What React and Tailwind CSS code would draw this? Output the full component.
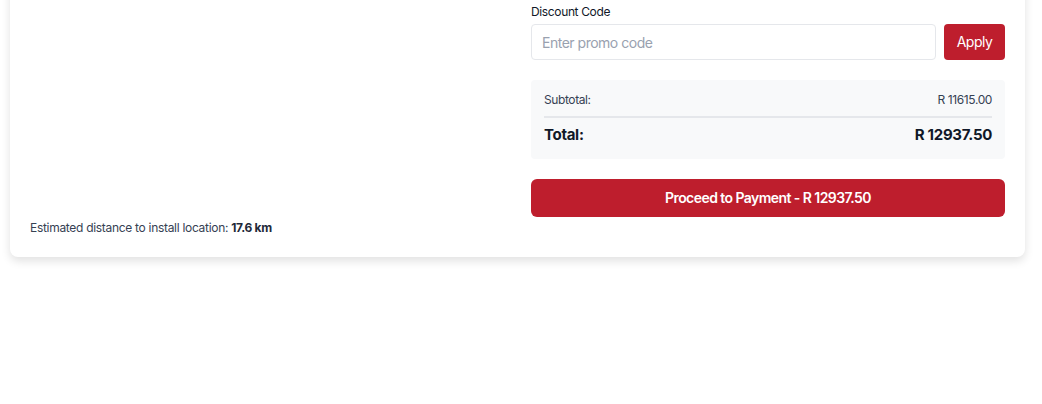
export default function App() {
  return (
    <div className="min-h-[404px] bg-white font-['Inter',sans-serif] text-gray-800">
      <div className="ml-[10px] w-[1015px] -mt-6 rounded-lg bg-white px-5 pt-6 pb-[21px] shadow-[0_4px_10px_rgba(0,0,0,0.12)]">
        <div className="grid grid-cols-2 gap-[27px]">
          <div></div>
          <div>
            <label className="block pt-[4px] text-xs leading-4 tracking-[-0.03em] text-gray-900">Discount Code</label>
            <div className="mt-[4px] flex gap-2">
              <input
                type="text"
                placeholder="Enter promo code"
                className="h-9 flex-1 rounded border border-gray-200 px-[10px] text-sm tracking-[-0.035em] text-gray-800 placeholder:text-gray-400 outline-none"
              />
              <button className="h-9 w-[61px] rounded bg-[#be1e2d] text-sm tracking-[-0.035em] text-white">Apply</button>
            </div>

            <div className="mt-5 rounded bg-[#f8f9fa] px-[13px] pt-3 pb-3">
              <div className="flex justify-between border-b-2 border-gray-200 pb-2 text-xs leading-4 tracking-[-0.033em] text-gray-700">
                <span>Subtotal:</span>
                <span>R 11615.00</span>
              </div>
              <div className="flex justify-between pt-[5px] text-[15px] leading-6 font-bold tracking-[-0.02em] text-gray-900">
                <span>Total:</span>
                <span>R 12937.50</span>
              </div>
            </div>

            <button className="mt-5 h-[38px] w-full rounded-md bg-[#be1e2d] text-sm font-semibold tracking-[-0.04em] text-white">
              Proceed to Payment - R 12937.50
            </button>
          </div>
        </div>
        <p className="mt-[3px] text-xs leading-4 tracking-[-0.025em] text-gray-700">
          Estimated distance to install location: <span className="font-bold text-gray-800">17.6 km</span>
        </p>
      </div>
    </div>
  );
}
